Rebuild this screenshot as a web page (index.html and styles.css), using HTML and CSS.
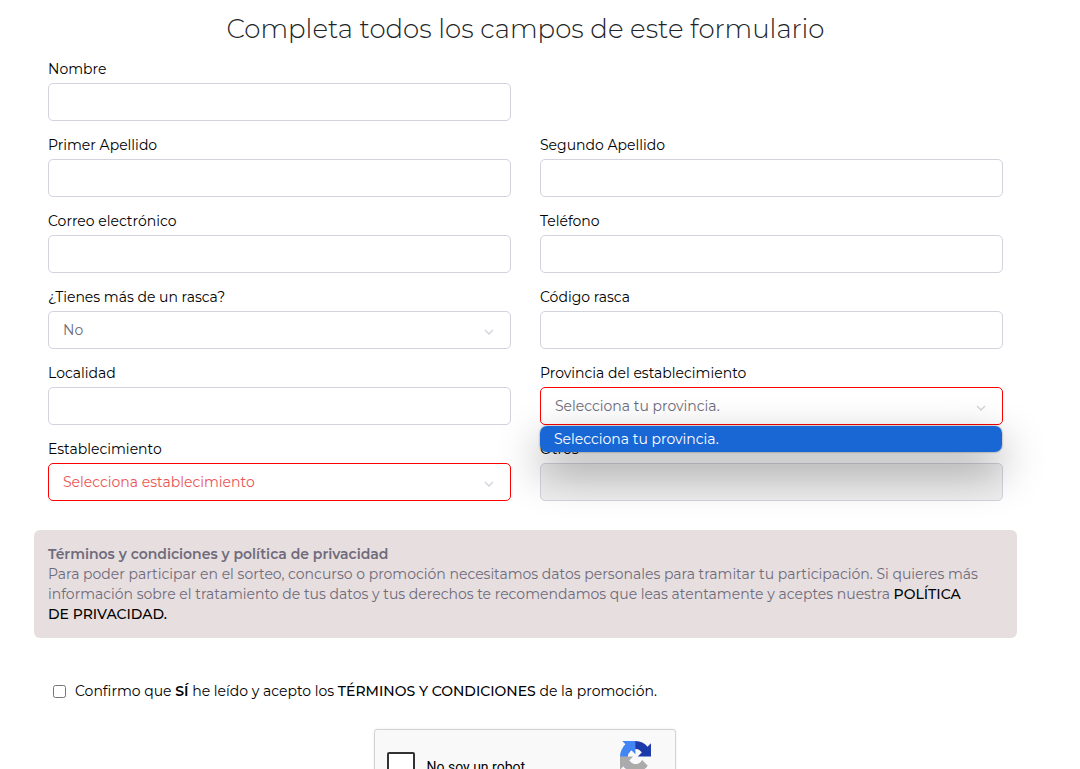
FILE: index.html
```html
<!DOCTYPE html>
<html lang="es">
<head>
<meta charset="utf-8">
<meta name="viewport" content="width=device-width, initial-scale=1">
<title>Formulario de participación</title>
<link rel="stylesheet" href="styles.css">
</head>
<body>
<main class="page">
  <h1 class="title">Completa todos los campos de este formulario</h1>
  <form class="form">
    <div class="fields">
      <div class="field field-first">
        <label for="nombre">Nombre</label>
        <input class="control" id="nombre" type="text">
      </div>
      <div class="field">
        <label for="apellido1">Primer Apellido</label>
        <input class="control" id="apellido1" type="text">
      </div>
      <div class="field">
        <label for="apellido2">Segundo Apellido</label>
        <input class="control" id="apellido2" type="text">
      </div>
      <div class="field">
        <label for="correo">Correo electrónico</label>
        <input class="control" id="correo" type="email">
      </div>
      <div class="field">
        <label for="telefono">Teléfono</label>
        <input class="control" id="telefono" type="tel">
      </div>
      <div class="field">
        <label for="mas">¿Tienes más de un rasca?</label>
        <div class="select-wrap">
          <select class="control" id="mas"><option>No</option></select>
          <svg class="chevron" viewBox="0 0 10 6" aria-hidden="true"><path d="M1 1l4 4 4-4"/></svg>
        </div>
      </div>
      <div class="field">
        <label for="codigo">Código rasca</label>
        <input class="control" id="codigo" type="text">
      </div>
      <div class="field">
        <label for="localidad">Localidad</label>
        <input class="control" id="localidad" type="text">
      </div>
      <div class="field">
        <label for="provincia">Provincia del establecimiento</label>
        <div class="select-wrap">
          <select class="control invalid" id="provincia"><option>Selecciona tu provincia.</option></select>
          <svg class="chevron" viewBox="0 0 10 6" aria-hidden="true"><path d="M1 1l4 4 4-4"/></svg>
          <div class="options" role="listbox" aria-label="Provincia del establecimiento">
            <div class="option" role="option" aria-selected="true">Selecciona tu provincia.</div>
          </div>
        </div>
      </div>
      <div class="field">
        <label for="establecimiento">Establecimiento</label>
        <div class="select-wrap">
          <select class="control invalid error-text" id="establecimiento"><option>Selecciona establecimiento</option></select>
          <svg class="chevron" viewBox="0 0 10 6" aria-hidden="true"><path d="M1 1l4 4 4-4"/></svg>
        </div>
      </div>
      <div class="field">
        <label for="otros">Otros</label>
        <input class="control" id="otros" type="text" disabled>
      </div>
    </div>

    <section class="notice">
      <h2 class="notice-title">Términos y condiciones y política de privacidad</h2>
      <p class="notice-text">Para poder participar en el sorteo, concurso o promoción necesitamos datos personales para tramitar tu participación. Si quieres más información sobre el tratamiento de tus datos y tus derechos te recomendamos que leas atentamente y aceptes nuestra <a class="link" href="#privacidad">POLÍTICA DE&nbsp;PRIVACIDAD.</a></p>
    </section>

    <div class="confirm">
      <input class="check" id="acepto" type="checkbox">
      <label for="acepto">Confirmo que <strong>SÍ</strong> he leído y acepto los <a class="link" href="#terminos">TÉRMINOS Y CONDICIONES</a> de la promoción.</label>
    </div>

    <div class="captcha-holder">
      <div class="captcha">
        <input class="captcha-check" id="robot" type="checkbox">
        <label class="captcha-label" for="robot">No soy un robot</label>
        <svg class="captcha-logo" viewBox="0 0 64 64" aria-hidden="true">
          <path fill="#1c3aa9" d="M64 31.955l-.033-1.37V4.687l-7.16 7.16C50.948 4.674 42.033.093 32.05.093c-10.4 0-19.622 4.96-25.458 12.64l11.736 11.86a15.55 15.55 0 0 1 4.754-5.334c2.05-1.6 4.952-2.906 8.968-2.906.485 0 .86.057 1.135.163 4.976.393 9.288 3.14 11.828 7.124l-8.307 8.307L64 31.953"/>
          <path fill="#4285f4" d="M31.862.094l-1.37.033H4.594l7.16 7.16C4.58 13.147 0 22.06 0 32.046c0 10.4 4.96 19.622 12.64 25.458L24.5 45.768a15.55 15.55 0 0 1-5.334-4.754c-1.6-2.05-2.906-4.952-2.906-8.968 0-.485.057-.86.163-1.135.393-4.976 3.14-9.288 7.124-11.828l8.307 8.307L31.86.095"/>
          <path fill="#ababab" d="M.001 32.045l.033 1.37v25.898l7.16-7.16c5.86 7.173 14.774 11.754 24.76 11.754 10.4 0 19.622-4.96 25.458-12.64l-11.736-11.86a15.55 15.55 0 0 1-4.754 5.334c-2.05 1.6-4.952 2.906-8.968 2.906-.485 0-.86-.057-1.135-.163-4.976-.393-9.288-3.14-11.828-7.124l8.307-8.307c-10.522.04-22.4.066-27.295-.005"/>
        </svg>
      </div>
    </div>
  </form>
</main>
</body>
</html>
```
FILE: styles.css
```css
* { box-sizing: border-box; }

body {
  margin: 0;
  height: 100vh;
  overflow: hidden;
  background: #fff;
  color: #000;
  font-family: Montserrat, Inter, sans-serif;
  font-size: 14px;
  font-weight: 400;
  line-height: 20px;
}

.page { padding: 11px 63px 0 34px; }

.title {
  margin: 0 0 12px;
  color: #212529;
  font-size: 26px;
  font-weight: 300;
  line-height: 36px;
  text-align: center;
}

.fields {
  display: grid;
  grid-template-columns: 1fr 1fr;
  gap: 14px 29px;
  padding: 0 14px;
}

.field {
  display: flex;
  flex-direction: column;
  gap: 4px;
}

.field-first,
.field-first + .field { grid-column: 1 / 2; }

.control {
  display: block;
  width: 100%;
  height: 38px;
  padding: 0 14px;
  border: 1px solid #d4d2dc;
  border-radius: 5px;
  background: #fff;
  color: #6e6b7b;
  font: inherit;
  appearance: none;
}

.control:disabled { background: #efefef; }
.invalid { border-color: #f00; }
.error-text { color: #ea5455; }

.select-wrap { position: relative; }

.chevron {
  position: absolute;
  right: 17px;
  top: 18px;
  width: 10px;
  height: 6px;
  fill: none;
  stroke: #d4d2dc;
  stroke-width: 1.4;
  pointer-events: none;
}

.options {
  position: absolute;
  z-index: 1;
  top: 100%;
  left: 0;
  right: 1px;
  margin-top: 1px;
  border-radius: 7px;
  box-shadow: 0 0 2px rgba(0, 0, 0, .5), 0 18px 44px rgba(0, 0, 0, .42);
}

.option {
  padding: 3px 14px;
  border-radius: 7px;
  background: #1967d5;
  color: #fff;
}

.notice {
  margin-top: 29px;
  padding: 14px;
  border-radius: 6px;
  background: #e7dedf;
  color: #6e6b7b;
}

.notice-title {
  margin: 0;
  font-size: 14px;
  font-weight: 600;
  line-height: 20px;
}

.notice-text { margin: 0; }

.link {
  color: #000;
  font-weight: 500;
  text-decoration: none;
}

.confirm {
  display: flex;
  align-items: center;
  gap: 9px;
  margin-top: 43px;
  padding-left: 19px;
}

.confirm strong { font-weight: 600; }

.check {
  width: 13px;
  height: 13px;
  margin: 0;
}

.captcha-holder {
  width: 304px;
  margin: 28px auto 0;
}

.captcha {
  display: flex;
  align-items: flex-start;
  width: 302px;
  height: 76px;
  padding: 11px 24px 0 12px;
  border: 1px solid #d3d3d3;
  border-radius: 3px;
  background: #f9f9f9;
  box-shadow: 0 0 3px rgba(0, 0, 0, .08);
  font-family: Roboto, sans-serif;
}

.captcha-check {
  width: 28px;
  height: 28px;
  margin: 11px 12px 0 0;
  border: 2px solid #333;
  border-radius: 2px;
  background: #fff;
  appearance: none;
}

.captcha-label { margin-top: 16px; }

.captcha-logo {
  width: 31px;
  height: 31px;
  margin-left: auto;
}
```
